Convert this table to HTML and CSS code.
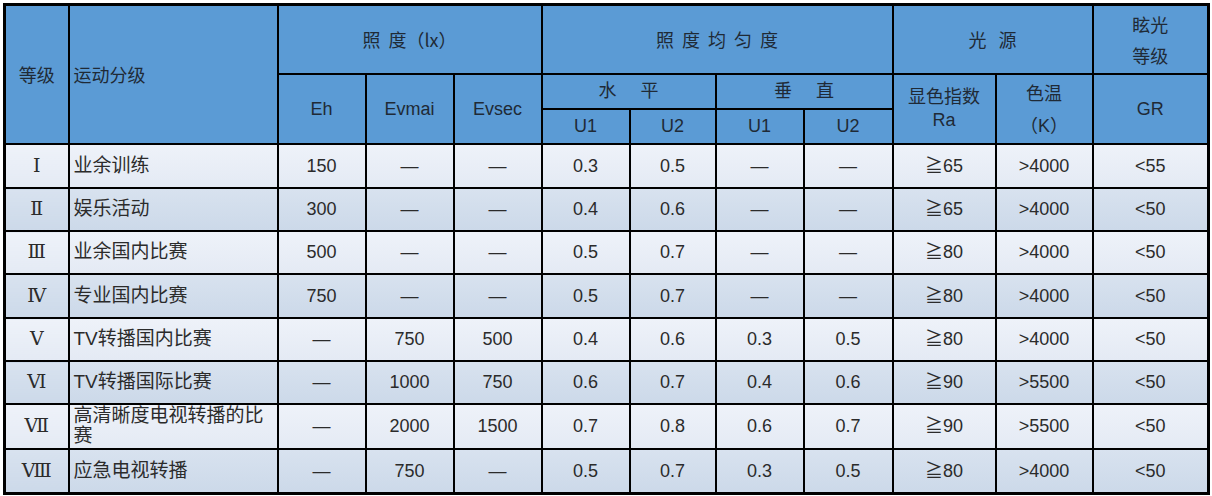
FILE: index.html
```html
<!DOCTYPE html>
<html lang="zh-CN">
<head>
<meta charset="utf-8">
<title>运动照明等级</title>
<link rel="stylesheet" href="styles.css">
</head>
<body>
<table class="grid">
  <colgroup>
    <col class="c-lv"><col class="c-name"><col class="c-n"><col class="c-n"><col class="c-n"><col class="c-n"><col class="c-u"><col class="c-n"><col class="c-n2"><col class="c-ra"><col class="c-k"><col class="c-gr">
  </colgroup>
  <thead>
    <tr class="h1">
      <th rowspan="3">等级</th>
      <th rowspan="3" class="left">运动分级</th>
      <th colspan="3"><span class="zd">照</span>度（lx）</th>
      <th colspan="4" class="wide">照度均匀度</th>
      <th colspan="2" class="gy">光源</th>
      <th class="two">眩光<br>等级</th>
    </tr>
    <tr class="h2">
      <th rowspan="2">Eh</th>
      <th rowspan="2">Evmai</th>
      <th rowspan="2">Evsec</th>
      <th colspan="2" class="sp">水　平</th>
      <th colspan="2" class="sp">垂　直</th>
      <th rowspan="2" class="ra">显色指数<br>Ra</th>
      <th rowspan="2" class="k">色温<br>（K）</th>
      <th rowspan="2">GR</th>
    </tr>
    <tr class="h3">
      <th>U1</th><th>U2</th><th>U1</th><th>U2</th>
    </tr>
  </thead>
  <tbody>
    <tr class="odd r44"><td class="lv">Ⅰ</td><td class="name">业余训练</td><td>150</td><td>—</td><td>—</td><td>0.3</td><td>0.5</td><td>—</td><td>—</td><td>≧65</td><td>&gt;4000</td><td>&lt;55</td></tr>
    <tr class="even r43"><td class="lv">Ⅱ</td><td class="name">娱乐活动</td><td>300</td><td>—</td><td>—</td><td>0.4</td><td>0.6</td><td>—</td><td>—</td><td>≧65</td><td>&gt;4000</td><td>&lt;50</td></tr>
    <tr class="odd r43"><td class="lv">Ⅲ</td><td class="name">业余国内比赛</td><td>500</td><td>—</td><td>—</td><td>0.5</td><td>0.7</td><td>—</td><td>—</td><td>≧80</td><td>&gt;4000</td><td>&lt;50</td></tr>
    <tr class="even r44"><td class="lv">Ⅳ</td><td class="name">专业国内比赛</td><td>750</td><td>—</td><td>—</td><td>0.5</td><td>0.7</td><td>—</td><td>—</td><td>≧80</td><td>&gt;4000</td><td>&lt;50</td></tr>
    <tr class="odd r43"><td class="lv">Ⅴ</td><td class="name">TV转播国内比赛</td><td>—</td><td>750</td><td>500</td><td>0.4</td><td>0.6</td><td>0.3</td><td>0.5</td><td>≧80</td><td>&gt;4000</td><td>&lt;50</td></tr>
    <tr class="even r43"><td class="lv">Ⅵ</td><td class="name">TV转播国际比赛</td><td>—</td><td>1000</td><td>750</td><td>0.6</td><td>0.7</td><td>0.4</td><td>0.6</td><td>≧90</td><td>&gt;5500</td><td>&lt;50</td></tr>
    <tr class="odd r44"><td class="lv">Ⅶ</td><td class="name multi"><div class="clip">高清晰度电视转播的比赛</div></td><td>—</td><td>2000</td><td>1500</td><td>0.7</td><td>0.8</td><td>0.6</td><td>0.7</td><td>≧90</td><td>&gt;5500</td><td>&lt;50</td></tr>
    <tr class="even r45"><td class="lv">Ⅷ</td><td class="name">应急电视转播</td><td>—</td><td>750</td><td>—</td><td>0.5</td><td>0.7</td><td>0.3</td><td>0.5</td><td>≧80</td><td>&gt;4000</td><td>&lt;50</td></tr>
  </tbody>
</table>
</body>
</html>
```
FILE: styles.css
```css
html, body {
  margin: 0;
  padding: 0;
  background: #ffffff;
}

body {
  padding: 3px 0 0 3px;
  font-family: "Liberation Sans", "Noto Sans CJK SC", sans-serif;
  color: #2b2b2b;
}

.grid {
  border-collapse: collapse;
  table-layout: fixed;
  width: 1206px;
  border: 3px solid #000;
}

.c-lv { width: 64px; }
.c-name { width: 209px; }
.c-n { width: 88px; }
.c-u { width: 86px; }
.c-n2 { width: 89px; }
.c-ra { width: 103px; }
.c-k { width: 97px; }
.c-gr { width: 116px; }

.grid th,
.grid td {
  border: 2px solid #000;
  padding: 0;
  text-align: center;
  vertical-align: middle;
  font-size: 18px;
  font-weight: normal;
  line-height: 22px;
  overflow: hidden;
  white-space: nowrap;
}

.grid th {
  background: #5b9bd5;
  color: #1f2a36;
  font-family: "Noto Sans CJK SC", "Liberation Sans", sans-serif;
}

.grid th.left {
  text-align: left;
  padding-left: 4px;
}

.h1 { height: 69px; }
.h2 { height: 35px; }
.h3 { height: 35px; }

.h2 th, .h3 th {
  font-family: "Liberation Sans", "Noto Sans CJK SC", sans-serif;
}

.zd { margin-right: 8px; }

.wide { letter-spacing: 8px; text-indent: 8px; }
.gy { letter-spacing: 12px; text-indent: 12px; }
.sp { letter-spacing: 3px; text-indent: 3px; }

.grid th.two { line-height: 31px; padding-top: 2px; }
.grid th.ra { line-height: 23px; }
.grid th.k { line-height: 32px; padding-top: 3px; }

.r43 { height: 43px; }
.r44 { height: 44px; }
.r45 { height: 45px; }

.odd td { background: linear-gradient(#eef2f9, #e4eaf4); }
.even td { background: linear-gradient(#d8e2ef, #ccd9e9); }

.grid td.lv {
  font-family: "Liberation Serif", "DejaVu Serif", serif;
  font-size: 19px;
}

.grid td.name {
  text-align: left;
  padding-left: 4px;
  font-size: 19px;
  font-family: "Liberation Sans", "Noto Sans CJK SC", sans-serif;
}

.grid td.multi {
  white-space: normal;
  vertical-align: top;
}

.clip {
  height: 42px;
  overflow: hidden;
  line-height: 20px;
  padding-top: 1px;
}
```
